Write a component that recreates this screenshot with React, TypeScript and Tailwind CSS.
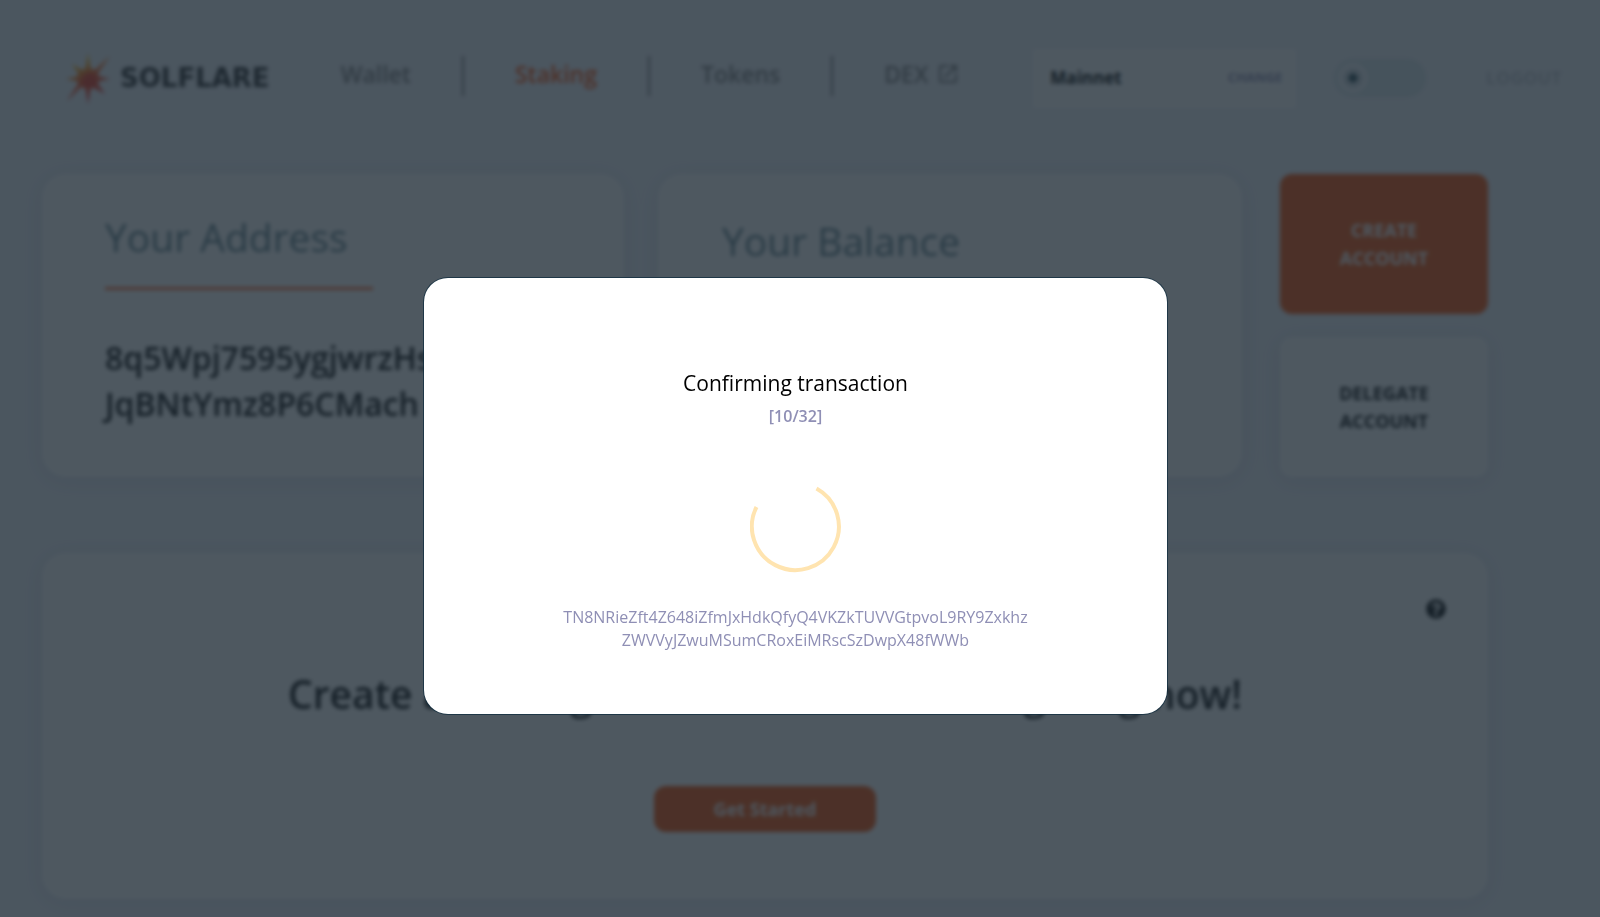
import { FaQuestionCircle } from 'react-icons/fa';
import { MdOpenInNew } from 'react-icons/md';

const NAV_ITEMS = [
  { label: 'Wallet' },
  { label: 'Staking', active: true },
  { label: 'Tokens' },
  { label: 'DEX', external: true },
];

const ADDRESS_LINES = ['8q5Wpj7595ygjwrzHs', 'JqBNtYmz8P6CMach'];

const SIGNATURE_LINES = [
  'TN8NRieZft4Z648iZfmJxHdkQfyQ4VKZkTUVVGtpvoL9RY9Zxkhz',
  'ZWVVyJZwuMSumCRoxEiMRscSzDwpX48fWWb',
];

const CARD = 'rounded-3xl bg-white shadow-[0_3px_20px_rgba(110,110,160,0.17)]';

const Logo = () => (
  <a href="#wallet" className="flex items-center gap-2">
    <svg viewBox="0 0 48 52" className="h-[52px] w-12" aria-hidden="true">
      <defs>
        <linearGradient id="flare" x1="0.2" y1="0" x2="0.7" y2="1">
          <stop offset="0.2" stopColor="#ffc010" />
          <stop offset="0.5" stopColor="#f9541c" />
          <stop offset="1" stopColor="#e2202c" />
        </linearGradient>
      </defs>
      <path
        fill="url(#flare)"
        d="M24 1 L26.500 16 L31 18 L46 4 L34 21 L35 24.500 L46 27 L35 29 L34 32 L41 42 L30 36 L26.500 37 L24 52 L21.500 37 L17 35 L3 49 L14 32 L13 29 L2 27 L13 24.500 L14 21 L8 12 L18 18 L21.500 16 Z"
      />
      <circle cx="25" cy="28" r="7" fill="#e8281f" opacity="0.6" />
    </svg>
    <span className="font-['DejaVu_Sans'] text-[26px] font-bold text-black/85">SOLFLARE</span>
  </a>
);

const Header = () => (
  <header className="flex h-[156px] items-center pr-[38px] pl-16">
    <Logo />
    <nav className="flex items-center pb-1 pl-5">
      {NAV_ITEMS.map(({ label, active, external }) => (
        <a
          key={label}
          href={`#${label.toLowerCase()}`}
          className={`flex h-10 items-center gap-2 border-l-2 border-[#7c7c7c] px-[51px] pb-1 text-[23px] font-semibold first:border-l-0 ${
            active ? 'text-[#fa4a00]' : 'text-[#7c7c7c]'
          }`}
        >
          {label}
          {external && <MdOpenInNew size={24} />}
        </a>
      ))}
    </nav>
    <div className="ml-auto flex items-center">
      <button className="flex h-[59px] w-[263px] items-center justify-between bg-white pr-[14px] pl-[17px]">
        <span className="text-[17px] font-bold text-black">Mainnet</span>
        <span className="text-[13px] font-bold text-[#8f8fb5]">CHANGE</span>
      </button>
      <label className="ml-[38px] flex h-[38px] w-[92px] items-center rounded-full bg-[#d8e6ea] p-1">
        <input type="checkbox" aria-label="Dark mode" className="peer sr-only" />
        <span className="flex size-[30px] items-center justify-center rounded-full bg-[#f4f7fc]">
          <svg viewBox="0 0 20 20" className="size-5 text-[#33525c]" fill="none" stroke="currentColor" aria-hidden="true">
            <circle cx="10" cy="10" r="4.500" fill="currentColor" />
            <circle cx="10" cy="10" r="8" strokeWidth="2.500" strokeDasharray="1.500 3.500" />
          </svg>
        </span>
      </label>
      <button className="ml-[60px] text-[17px] font-semibold tracking-wider text-[#b9bdc6]">LOGOUT</button>
    </div>
  </header>
);

const Summary = () => (
  <section className="flex gap-[34px]">
    <div className={`h-[303px] min-w-0 flex-1 px-[63px] pt-[35px] ${CARD}`}>
      <h2 className="text-[39px] leading-[56px] text-[#5b7c87]">Your Address</h2>
      <div className="mt-[22px] h-[3px] w-[268px] bg-[#fa4a00]/80" />
      <p className="mt-[45px] text-[32px] leading-[46px] font-semibold text-black">
        {ADDRESS_LINES.map((line) => (
          <span key={line} className="block">{line}</span>
        ))}
      </p>
    </div>
    <div className={`h-[303px] min-w-0 flex-1 px-16 pt-[39px] ${CARD}`}>
      <h2 className="text-[39px] leading-[56px] text-[#5b7c87]">Your Balance</h2>
    </div>
    <div className="ml-1 flex w-[208px] flex-col gap-[23px]">
      <button className="flex-1 rounded-xl bg-[#f54c00] px-10 text-lg leading-7 font-bold text-white">
        CREATE ACCOUNT
      </button>
      <button className="flex-1 rounded-xl bg-white px-10 text-lg leading-7 font-bold text-black shadow-[0_3px_20px_rgba(110,110,160,0.17)]">
        DELEGATE ACCOUNT
      </button>
    </div>
  </section>
);

const GetStarted = () => (
  <section className={`mt-[76px] flex h-[346px] flex-col items-center ${CARD}`}>
    <button aria-label="Help" className="mt-[46px] mr-[42px] self-end text-black">
      <FaQuestionCircle size={20} />
    </button>
    <h1 className="mt-[47px] text-[39px] leading-[56px] font-semibold whitespace-nowrap text-black">
      Create a staking account and start delegating now!
    </h1>
    <button className="mt-[64px] h-[46px] w-[222px] rounded-xl bg-[#f54c00] text-lg font-bold text-white">
      Get Started
    </button>
  </section>
);

const Spinner = () => (
  <svg viewBox="0 0 92 92" className="size-[92px]" fill="none" role="img" aria-label="Loading">
    <path d="M66.500 7.500 A43.500 43.500 0 1 1 6.500 26" stroke="#ffe4b0" strokeWidth="4" />
  </svg>
);

const ConfirmDialog = () => (
  <div className="fixed inset-0 flex items-center justify-center bg-[#1c2933]/78 pt-[75px] pr-[9px]">
    <div
      role="dialog"
      aria-modal="true"
      aria-labelledby="confirm-title"
      className="flex h-[436px] w-[743px] flex-col items-center rounded-3xl bg-white pt-[89px] text-[#8f8fb5] ring-1 ring-[#0c2a3c]/70"
    >
      <h2 id="confirm-title" className="text-[21px] leading-8 text-black">Confirming transaction</h2>
      <p className="mt-[5px] text-base leading-6 font-semibold">[10/32]</p>
      <div className="mt-[53px]">
        <Spinner />
      </div>
      <p className="mt-[33px] text-center text-base leading-[23px]">
        {SIGNATURE_LINES.map((line) => (
          <span key={line} className="block">{line}</span>
        ))}
      </p>
    </div>
  </div>
);

export default function App() {
  return (
    <div className="h-screen overflow-hidden bg-[#f1f4fa] font-['Open_Sans',sans-serif]">
      <div className="blur-[2px]">
        <Header />
        <main className="pt-[18px] pr-28 pl-[42px]">
          <Summary />
          <GetStarted />
        </main>
      </div>
      <ConfirmDialog />
    </div>
  );
}
